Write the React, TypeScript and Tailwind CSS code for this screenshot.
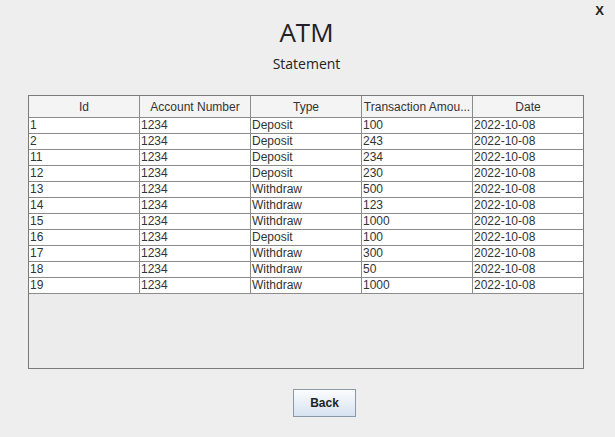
const columns = ["Id", "Account Number", "Type", "Transaction Amou...", "Date"];

const rows: string[][] = [
  ["1", "1234", "Deposit", "100", "2022-10-08"],
  ["2", "1234", "Deposit", "243", "2022-10-08"],
  ["11", "1234", "Deposit", "234", "2022-10-08"],
  ["12", "1234", "Deposit", "230", "2022-10-08"],
  ["13", "1234", "Withdraw", "500", "2022-10-08"],
  ["14", "1234", "Withdraw", "123", "2022-10-08"],
  ["15", "1234", "Withdraw", "1000", "2022-10-08"],
  ["16", "1234", "Deposit", "100", "2022-10-08"],
  ["17", "1234", "Withdraw", "300", "2022-10-08"],
  ["18", "1234", "Withdraw", "50", "2022-10-08"],
  ["19", "1234", "Withdraw", "1000", "2022-10-08"],
];

export default function App() {
  return (
    <div className="relative w-[615px] h-[437px] bg-[#eeeeee] flex flex-col items-start overflow-hidden">
      {/* close */}
      <span className="absolute top-[1px] right-[11px] text-[13px] font-bold text-[#222] font-['Liberation_Sans',sans-serif]">
        X
      </span>

      {/* Heading */}
      <div className="w-full flex flex-col items-center pr-[2px]">
        <h1 className="mt-[15px] text-[26px] leading-[34px] text-[#222] font-['Open_Sans',sans-serif]">ATM</h1>
        <h2 className="mt-[5px] text-[14px] leading-[20px] text-[#222] font-['Open_Sans',sans-serif]">Statement</h2>
      </div>

      {/* Table */}
      <div className="mt-[21px] ml-[28px] w-[556px] h-[274px] border border-[#7a7a7a] bg-[#ececec] font-['Liberation_Sans',sans-serif] text-[12px] text-[#333]">
        <div className="grid grid-cols-[111px_111px_111px_111px_110px] bg-[#f4f4f4]">
          {columns.map((c, i) => (
            <div
              key={c}
              className={`h-[22px] flex items-center justify-center border-b border-[#8c8c8c] ${i < 4 ? "border-r" : ""}`}
            >
              {c}
            </div>
          ))}
        </div>
        {rows.map((r, ri) => (
          <div key={ri} className="grid grid-cols-[111px_111px_111px_111px_110px] bg-white">
            {r.map((v, ci) => (
              <div
                key={ci}
                className={`h-[16px] leading-[15px] pl-[1px] border-b border-[#8c8c8c] ${ci < 4 ? "border-r" : ""}`}
              >
                {v}
              </div>
            ))}
          </div>
        ))}
      </div>

      {/* Back */}
      <button className="mt-[20px] ml-[293px] w-[63px] h-[28px] border border-[#8a98a8] bg-gradient-to-b from-[#fbfcfe] to-[#d6e3f1] text-[12px] font-bold text-[#222] font-['Liberation_Sans',sans-serif]">
        Back
      </button>
    </div>
  );
}
